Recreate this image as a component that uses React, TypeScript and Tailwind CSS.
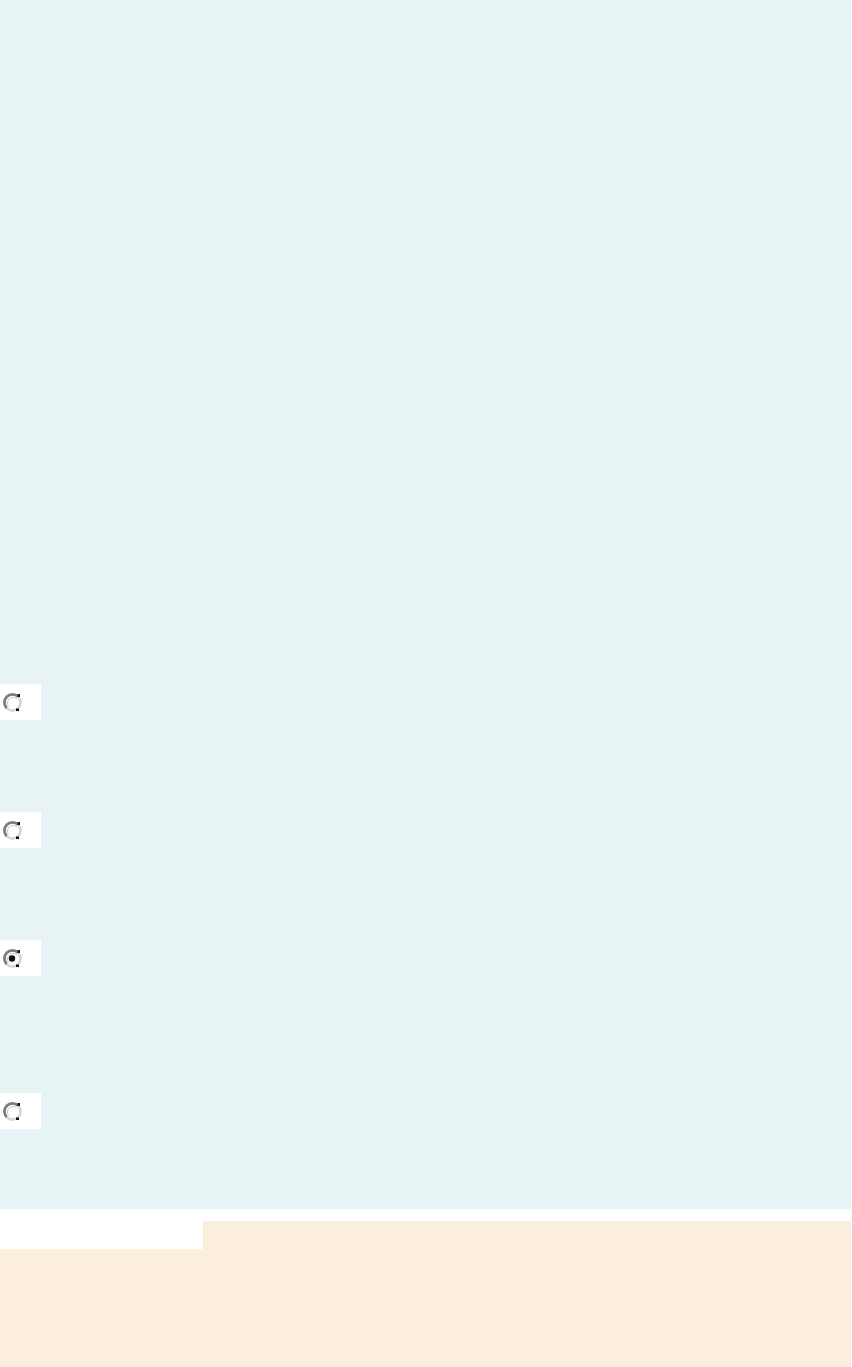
import React from "react";

function Radio({ checked }: { checked?: boolean }) {
  return (
    <svg width="21" height="21" viewBox="0 0 21 21" className="block">
      <circle cx="10.5" cy="10.5" r="8" fill="#ffffff" />
      <path d="M16.2 4.8 A8 8 0 0 0 4.8 16.2" fill="none" stroke="#7c7c7c" strokeWidth="2.8" />
      <path d="M4.8 16.2 A8 8 0 0 0 16.2 4.8" fill="none" stroke="#d8d8d8" strokeWidth="2.8" />
      <path d="M14.4 6.6 A5.6 5.6 0 0 0 6.6 14.4" fill="none" stroke="#c4c4c4" strokeWidth="1" />
      <rect x="15.5" y="2" width="2.5" height="3" fill="#111" />
      <rect x="14" y="16.5" width="3" height="2.5" fill="#111" />
      {checked && <circle cx="10" cy="10.5" r="3.2" fill="#111" />}
    </svg>
  );
}

function RadioBox({ checked }: { checked?: boolean }) {
  return (
    <div className="w-[41px] h-[36px] bg-white flex items-center pl-[2px]">
      <Radio checked={checked} />
    </div>
  );
}

export default function App() {
  return (
    <div className="w-[852px] h-[1367px] bg-white overflow-hidden">
      <div className="w-[851px] h-[1209px] bg-[#e7f3f5] pt-[684px] flex flex-col">
        <RadioBox />
        <div className="mt-[92px]">
          <RadioBox />
        </div>
        <div className="mt-[92px]">
          <RadioBox checked />
        </div>
        <div className="mt-[117px]">
          <RadioBox />
        </div>
      </div>
      <div className="mt-[12px] w-[851px] h-[146px] bg-[#fbeedc]">
        <div className="w-[203px] h-[28px] bg-white" />
      </div>
    </div>
  );
}
